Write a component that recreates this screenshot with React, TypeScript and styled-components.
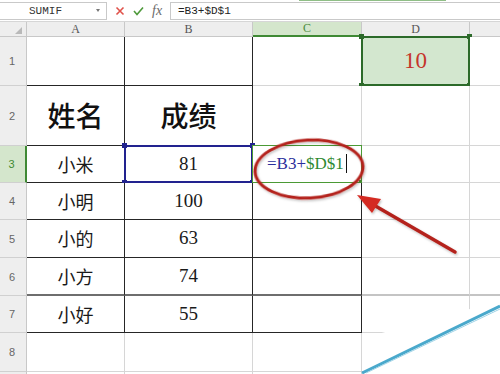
import React from 'react';
import styled, { createGlobalStyle, css } from 'styled-components';

const GlobalStyle = createGlobalStyle`
  html, body {
    margin: 0;
    padding: 0;
    background: #fff;
  }
  * {
    box-sizing: border-box;
  }
`;

const Page = styled.div`
  position: relative;
  width: 500px;
  height: 374px;
  overflow: hidden;
  background: #fff;
  font-family: "Liberation Sans", Arial, sans-serif;
`;

const Toolbar = styled.div`
  display: flex;
  align-items: center;
  height: 22px;
  background: #fff;
  border-bottom: 1px solid #d6d6d6;
`;

const NameBox = styled.div`
  display: flex;
  align-items: center;
  justify-content: space-between;
  width: 107px;
  height: 18px;
  border: 1px solid #c9c9c9;
  border-left: none;
  padding: 0 6px 0 29px;
  font-family: "Liberation Mono", "DejaVu Sans Mono", monospace;
  font-size: 11px;
  color: #333;
`;

const DropArrow = styled.span`
  width: 0;
  height: 0;
  border-left: 2px solid transparent;
  border-right: 2px solid transparent;
  border-top: 3px solid #777;
`;

const IconSlot = styled.span`
  display: flex;
  align-items: center;
  justify-content: center;
  width: 19px;
  height: 18px;
`;

const FxLabel = styled.span`
  display: flex;
  align-items: center;
  width: 22px;
  padding-left: 4px;
  font-family: "Liberation Serif", "Times New Roman", serif;
  font-style: italic;
  font-size: 14px;
  color: #6a6a6a;
`;

const FormulaBox = styled.div`
  position: relative;
  flex: 1;
  height: 18px;
  border: 1px solid #c9c9c9;
  border-right: none;
  padding-left: 7px;
  display: flex;
  align-items: center;
  font-family: "Liberation Mono", "DejaVu Sans Mono", monospace;
  font-size: 11px;
  color: #222;
`;

const ScrollHint = styled.span`
  position: absolute;
  top: -3px;
  left: 128px;
  width: 147px;
  height: 1px;
  background: #8fbe86;
`;

const Sheet = styled.div`
  display: grid;
  grid-template-columns: 27px 98px 128px 109px 108px 100px;
  grid-template-rows: 15px 49px 60px 37px 37px 38px 38px 37px 39px 40px;
`;

const Corner = styled.div`
  position: relative;
  background: #eeeeee;
  border-right: 1px solid #c8c8c8;
  border-bottom: 1px solid #c8c8c8;

  &::after {
    content: '';
    position: absolute;
    right: 4px;
    bottom: 2px;
    width: 0;
    height: 0;
    border-left: 7px solid transparent;
    border-bottom: 7px solid #b9b9b9;
  }
`;

const ColHead = styled.div<{ $active?: boolean }>`
  display: flex;
  align-items: center;
  justify-content: center;
  background: ${(p) => (p.$active ? '#d4e6cc' : '#eeeeee')};
  border-right: 1px solid #c8c8c8;
  border-bottom: ${(p) => (p.$active ? '2px solid #3f8a34' : '1px solid #c8c8c8')};
  font-family: "Liberation Serif", "Times New Roman", serif;
  font-size: 12px;
  color: ${(p) => (p.$active ? '#4b8b3f' : '#555')};
`;

const RowHead = styled.div<{ $active?: boolean }>`
  display: flex;
  align-items: center;
  justify-content: center;
  padding-right: 2px;
  background: ${(p) => (p.$active ? '#d4e6cc' : '#eeeeee')};
  border-right: ${(p) => (p.$active ? '2px solid #3f8a34' : '1px solid #c8c8c8')};
  border-bottom: 1px solid #d0d0d0;
  font-family: "Liberation Sans", Arial, sans-serif;
  font-size: 11px;
  color: ${(p) => (p.$active ? '#3f8a34' : '#666')};
`;

type CellKind = 'name' | 'title' | 'num' | 'value' | 'formula' | 'empty';

const kindStyles: Record<CellKind, ReturnType<typeof css>> = {
  name: css`
    font-family: "Noto Sans CJK SC", sans-serif;
    font-size: 18px;
    color: #1a1a1a;
  `,
  title: css`
    font-family: "Noto Sans CJK SC", sans-serif;
    font-size: 28px;
    font-weight: 500;
    color: #111;
  `,
  num: css`
    font-family: "Liberation Serif", "Times New Roman", serif;
    font-size: 19px;
    color: #1a1a1a;
  `,
  value: css`
    font-family: "Liberation Serif", "Times New Roman", serif;
    font-size: 23px;
    color: #c5352b;
  `,
  formula: css`
    justify-content: flex-start;
    padding-left: 14px;
    font-family: "Liberation Serif", "Times New Roman", serif;
    font-size: 17px;
  `,
  empty: css``,
};

const Cell = styled.div<{
  $kind: CellKind;
  $darkRight?: boolean;
  $darkBottom?: boolean;
  $heavyBottom?: string;
  $fill?: string;
}>`
  position: relative;
  display: flex;
  align-items: center;
  justify-content: center;
  padding-bottom: 1px;
  background: ${(p) => p.$fill || '#fff'};
  border-right: 1px solid ${(p) => (p.$darkRight ? '#262626' : '#d6d6d6')};
  border-bottom: ${(p) =>
    p.$heavyBottom
      ? `2px solid ${p.$heavyBottom}`
      : `1px solid ${p.$darkBottom ? '#262626' : '#d6d6d6'}`};
  ${(p) => kindStyles[p.$kind]}
`;

const Frame = styled.span<{ $color: string; $width: number }>`
  position: absolute;
  top: -1px;
  left: -1px;
  right: -1px;
  bottom: -1px;
  border: ${(p) => p.$width}px solid ${(p) => p.$color};
  pointer-events: none;
`;

const Handle = styled.span<{ $color: string; $v: 'top' | 'bottom'; $h: 'left' | 'right' }>`
  position: absolute;
  ${(p) => p.$v}: -3px;
  ${(p) => p.$h}: -3px;
  width: 5px;
  height: 5px;
  background: ${(p) => p.$color};
`;

const Ref = styled.span<{ $color: string }>`
  color: ${(p) => p.$color};
`;

const Caret = styled.span`
  display: inline-block;
  width: 1px;
  height: 19px;
  margin-left: 2px;
  background: #111;
`;

const Overlay = styled.svg`
  position: absolute;
  left: 0;
  top: 0;
  pointer-events: none;
`;

// the E label sits past the right edge of the window, so it is left blank
const columns = ['A', 'B', 'C', 'D', ''];

const data: { label: string; cells: string[] }[] = [
  { label: '1', cells: ['', '', '', '10', ''] },
  { label: '2', cells: ['姓名', '成绩', '', '', ''] },
  { label: '3', cells: ['小米', '81', '=', '', ''] },
  { label: '4', cells: ['小明', '100', '', '', ''] },
  { label: '5', cells: ['小的', '63', '', '', ''] },
  { label: '6', cells: ['小方', '74', '', '', ''] },
  { label: '7', cells: ['小好', '55', '', '', ''] },
  { label: '8', cells: ['', '', '', '', ''] },
  { label: '', cells: ['', '', '', '', ''] },
];

const isDark = (row: number, col: number) =>
  (col <= 1 && row >= 1 && row <= 7) || (col === 2 && row >= 3 && row <= 7);

const kindFor = (row: number, col: number, text: string): CellKind => {
  if (row === 3 && col === 2) return 'formula';
  if (!text) return 'empty';
  if (row === 2) return 'title';
  if (row === 1 && col === 3) return 'value';
  return col === 0 ? 'name' : 'num';
};

const corners: ['top' | 'bottom', 'left' | 'right'][] = [
  ['top', 'left'],
  ['top', 'right'],
  ['bottom', 'left'],
  ['bottom', 'right'],
];

const App: React.FC = () => {
  return (
    <Page>
      <GlobalStyle />
      <Toolbar>
        <NameBox>
          SUMIF
          <DropArrow />
        </NameBox>
        <IconSlot style={{ marginLeft: 3 }}>
          <svg width="10" height="10" viewBox="0 0 10 10">
            <path d="M1.5 1.5 L8.5 8.5 M8.5 1.5 L1.5 8.5" stroke="#e0524a" strokeWidth="1.6" />
          </svg>
        </IconSlot>
        <IconSlot>
          <svg width="11" height="10" viewBox="0 0 11 10">
            <path d="M1 5 L4 8.5 L10 1.5" stroke="#4f9a3c" strokeWidth="1.6" fill="none" />
          </svg>
        </IconSlot>
        <FxLabel>fx</FxLabel>
        <FormulaBox>
          =B3+$D$1
          <ScrollHint />
        </FormulaBox>
      </Toolbar>

      <Sheet>
        <Corner />
        {columns.map((c, i) => (
          <ColHead key={i} $active={c === 'C'}>
            {c}
          </ColHead>
        ))}

        {data.map((row, r) => {
          const rowNo = r + 1;
          return (
            <React.Fragment key={rowNo}>
              <RowHead $active={rowNo === 3}>{row.label}</RowHead>
              {row.cells.map((text, c) => {
                const kind = kindFor(rowNo, c, text);
                const dark = isDark(rowNo, c);
                const heavy = rowNo === 6 ? (c <= 2 ? '#6e6e6e' : '#c4c4c4') : undefined;
                return (
                  <Cell
                    key={c}
                    $kind={kind}
                    $darkRight={dark}
                    $darkBottom={dark}
                    $heavyBottom={heavy}
                    $fill={rowNo === 1 && c === 3 ? '#d3e7cf' : undefined}
                  >
                    {kind === 'formula' ? (
                      <>
                        <Ref $color="#2b2f9c">=B3+</Ref>
                        <Ref $color="#2f8a33">$D$1</Ref>
                        <Caret />
                      </>
                    ) : (
                      text
                    )}
                    {rowNo === 3 && c === 1 && (
                      <>
                        <Frame $color="#22238f" $width={2} />
                        {corners.map(([v, h]) => (
                          <Handle key={v + h} $color="#22238f" $v={v} $h={h} />
                        ))}
                      </>
                    )}
                    {rowNo === 3 && c === 2 && (
                      <>
                        <Frame $color="#4b9a35" $width={1} />
                        <Handle $color="#4b9a35" $v="bottom" $h="right" />
                      </>
                    )}
                    {rowNo === 1 && c === 3 && (
                      <>
                        <Frame $color="#2c6a2a" $width={2} />
                        {corners.map(([v, h]) => (
                          <Handle key={v + h} $color="#2c6a2a" $v={v} $h={h} />
                        ))}
                      </>
                    )}
                  </Cell>
                );
              })}
            </React.Fragment>
          );
        })}
      </Sheet>

      <Overlay width="500" height="374" viewBox="0 0 500 374">
        <defs>
          <filter id="soft" x="-20%" y="-20%" width="140%" height="140%">
            <feDropShadow dx="1" dy="1.5" stdDeviation="1.2" floodColor="#000" floodOpacity="0.25" />
          </filter>
        </defs>
        <ellipse
          cx="309"
          cy="169"
          rx="54"
          ry="29"
          transform="rotate(-3 309 169)"
          fill="none"
          stroke="#b4241d"
          strokeWidth="3"
          filter="url(#soft)"
        />
        <g filter="url(#soft)">
          <line x1="455" y1="252" x2="372" y2="204" stroke="#b4241d" strokeWidth="3.5" strokeLinecap="round" />
          <polygon points="357,195 372,213 381,199" fill="#d42a20" />
        </g>
        <polygon points="363,340 378,334 470,309 500,299 500,374 363,374" fill="#fff" />
        <line x1="362" y1="373" x2="500" y2="306" stroke="#4aa9cc" strokeWidth="3" />
        <line x1="366" y1="373" x2="500" y2="309" stroke="#9fd3e6" strokeWidth="1" />
      </Overlay>
    </Page>
  );
};

export default App;
